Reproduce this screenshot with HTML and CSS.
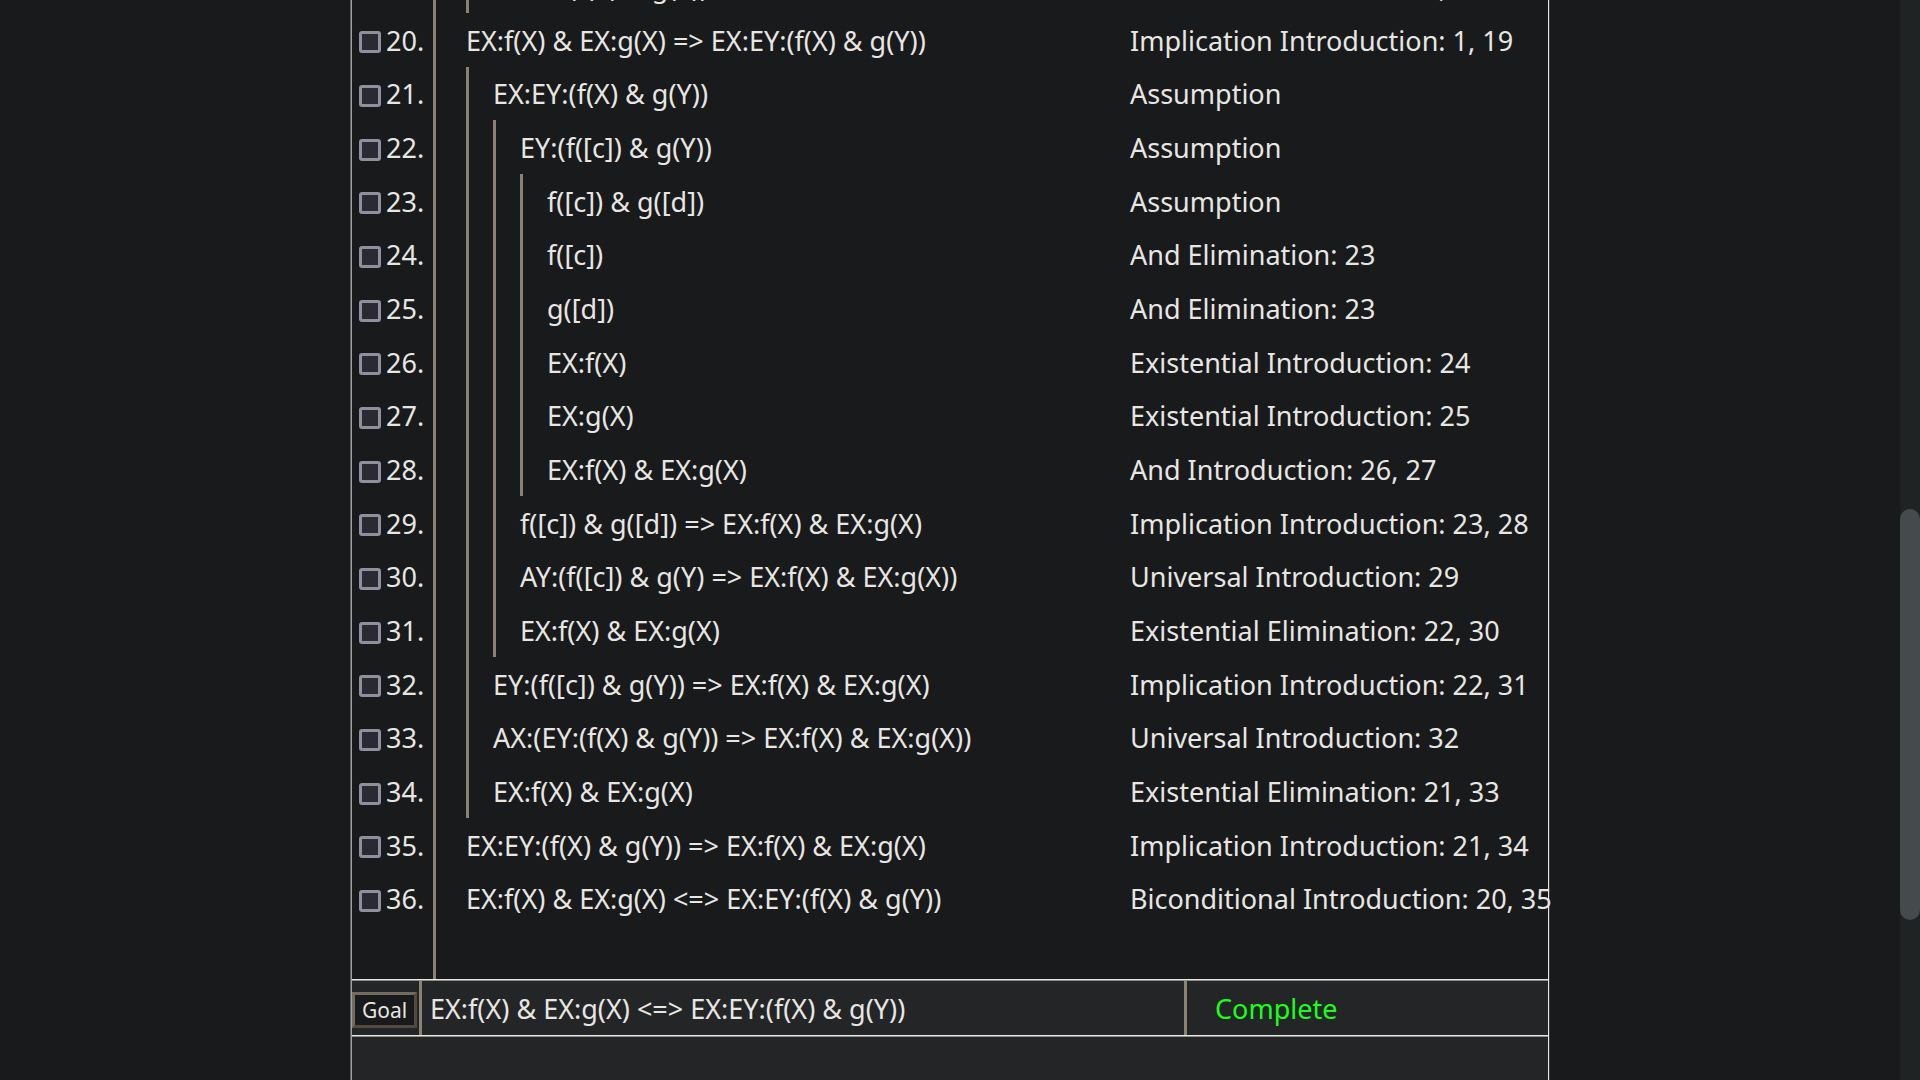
FILE: index.html
```
<!DOCTYPE html>
<html lang="en">
<head>
<meta charset="utf-8">
<title>Proof</title>
<link rel="stylesheet" href="styles.css">
<script src="proof.js" defer></script>
</head>
<body>
<div class="page">
  <main class="sheet">
    <section class="proof" id="proof" aria-label="Proof"></section>
    <footer class="goal">
      <button class="goal-button" type="button">Goal</button>
      <div class="goal-formula"><span class="text">EX:f(X) &amp; EX:g(X) &lt;=&gt; EX:EY:(f(X) &amp; g(Y))</span></div>
      <div class="goal-status"><span class="text">Complete</span></div>
    </footer>
    <div class="below"></div>
  </main>
</div>
<div class="scrollbar"><div class="thumb"></div></div>
</body>
</html>
```
FILE: styles.css
```
* { box-sizing: border-box; }

body {
  margin: 0;
  height: 100vh;
  display: flex;
  overflow: hidden;
  background: #181a1b;
  color: #e8e6e3;
  font-family: "Noto Sans", sans-serif;
  font-size: 27px;
  line-height: 38px;
}

.page {
  flex: 1;
  display: flex;
  justify-content: center;
}

.sheet {
  width: 63%;
  min-width: 1198px;
  display: flex;
  flex-direction: column;
  border-left: 1px solid #a5a3a1;
  border-right: 1px solid #e8e6e3;
  box-shadow: -1px 0 #5c5c5b, 1px 0 #3a3b3b;
}

.proof {
  flex: 1;
  min-height: 0;
  display: grid;
  grid-template-rows: 13px;
  grid-auto-rows: 1fr;
}

.line {
  min-height: 0;
  display: grid;
  grid-template-columns: 81px 1fr 418px;
  white-space: nowrap;
}

.line.cut {
  align-content: end;
  grid-auto-rows: 54px;
  overflow: hidden;
}

.text { padding-top: 2px; }

.number {
  display: flex;
  align-items: center;
  gap: 5px;
  padding-left: 7px;
}

.check {
  appearance: none;
  width: 22px;
  height: 22px;
  margin: 5px 0 0;
  border: 3px solid #8f8f9d;
  border-radius: 3px;
  background: #2b2a33;
}

.formula {
  display: flex;
  align-items: center;
  border-left: 3px solid #8c8273;
  padding-left: 30px;
}

.bar {
  align-self: stretch;
  width: 3px;
  margin-right: 24px;
  background: #8c8273;
}

.reason {
  display: flex;
  align-items: center;
}

.goal {
  display: grid;
  grid-template-columns: 67px 1fr 364px;
  height: 57px;
  padding-top: 1px;
  border-top: 1px solid #e8e6e3;
  border-bottom: 1px solid #e8e6e3;
  box-shadow: inset 0 1px #8f8e8c;
  background: #232526;
}

.goal-button {
  align-self: center;
  justify-self: start;
  width: 65px;
  height: 36px;
  margin-top: 4px;
  padding: 0;
  border: 3px solid;
  border-color: #736b5e #504a41 #504a41 #736b5e;
  background: #181a1b;
  color: #e8e6e3;
  font-family: "Noto Sans", sans-serif;
  font-size: 21px;
  line-height: 30px;
}

.goal-formula,
.goal-status {
  display: flex;
  align-items: center;
  border-left: 3px solid #8c8273;
  padding-left: 8px;
}

.goal-status {
  padding-left: 28px;
  color: #1aff1a;
}

.below {
  height: 44px;
  border-top: 1px solid #8f8e8c;
  background: #232526;
}

.scrollbar {
  width: 20px;
  display: grid;
  grid-template-rows: 509fr 411fr 160fr;
  background: #202324;
}

.thumb {
  grid-row: 2;
  border-radius: 10px;
  background: #454a4d;
}
```
FILE: proof.js
```
// Each entry: line number, nesting depth, formula, justification.
const lines = [
  [19, 1, "EX:EY:(f(X) & g(Y))", "Existential Elimination: 1, 18"],
  [20, 0, "EX:f(X) & EX:g(X) => EX:EY:(f(X) & g(Y))", "Implication Introduction: 1, 19"],
  [21, 1, "EX:EY:(f(X) & g(Y))", "Assumption"],
  [22, 2, "EY:(f([c]) & g(Y))", "Assumption"],
  [23, 3, "f([c]) & g([d])", "Assumption"],
  [24, 3, "f([c])", "And Elimination: 23"],
  [25, 3, "g([d])", "And Elimination: 23"],
  [26, 3, "EX:f(X)", "Existential Introduction: 24"],
  [27, 3, "EX:g(X)", "Existential Introduction: 25"],
  [28, 3, "EX:f(X) & EX:g(X)", "And Introduction: 26, 27"],
  [29, 2, "f([c]) & g([d]) => EX:f(X) & EX:g(X)", "Implication Introduction: 23, 28"],
  [30, 2, "AY:(f([c]) & g(Y) => EX:f(X) & EX:g(X))", "Universal Introduction: 29"],
  [31, 2, "EX:f(X) & EX:g(X)", "Existential Elimination: 22, 30"],
  [32, 1, "EY:(f([c]) & g(Y)) => EX:f(X) & EX:g(X)", "Implication Introduction: 22, 31"],
  [33, 1, "AX:(EY:(f(X) & g(Y)) => EX:f(X) & EX:g(X))", "Universal Introduction: 32"],
  [34, 1, "EX:f(X) & EX:g(X)", "Existential Elimination: 21, 33"],
  [35, 0, "EX:EY:(f(X) & g(Y)) => EX:f(X) & EX:g(X)", "Implication Introduction: 21, 34"],
  [36, 0, "EX:f(X) & EX:g(X) <=> EX:EY:(f(X) & g(Y))", "Biconditional Introduction: 20, 35"],
];

function make(tag, className, text) {
  const node = document.createElement(tag);
  node.className = className;
  if (text) node.textContent = text;
  return node;
}

const proof = document.getElementById("proof");

lines.forEach(([n, depth, formula, reason], i) => {
  const row = make("div", i === 0 ? "line cut" : "line");
  const number = make("label", "number");
  const check = make("input", "check");
  check.type = "checkbox";
  number.append(check, make("span", "text", n + "."));
  const cell = make("div", "formula");
  for (let d = 0; d < depth; d++) cell.append(make("span", "bar"));
  cell.append(make("span", "text", formula));
  const why = make("div", "reason");
  why.append(make("span", "text", reason));
  row.append(number, cell, why);
  proof.append(row);
});

// Empty line that keeps the main bar running down to the goal.
const last = make("div", "line");
last.append(make("div", "number"), make("div", "formula"), make("div", "reason"));
proof.append(last);
```
